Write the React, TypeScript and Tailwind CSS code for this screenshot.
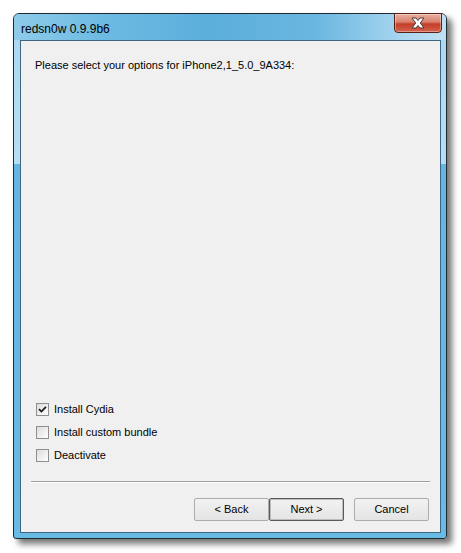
import React from "react";

const options = [
  { label: "Install Cydia", checked: true },
  { label: "Install custom bundle", checked: false },
  { label: "Deactivate", checked: false },
];

function Checkbox({ checked }: { checked: boolean }) {
  return (
    <span className="flex h-[13px] w-[13px] shrink-0 items-center justify-center border border-[#8e8f8f] bg-gradient-to-br from-[#dcdcdc] to-[#ffffff]">
      {checked && (
        <svg width="9" height="9" viewBox="0 0 9 9">
          <path d="M1 4.2 L3.4 6.6 L8 1.8" fill="none" stroke="#1a1a1a" strokeWidth="1.7" />
        </svg>
      )}
    </span>
  );
}

function Button({ label, primary }: { label: string; primary?: boolean }) {
  return (
    <button
      className={
        "flex h-[23px] w-[75px] items-center justify-center rounded-[2px] bg-gradient-to-b from-[#f2f2f2] to-[#e4e4e4] text-[11px] text-black " +
        (primary
          ? "border border-[#5a5a5a] shadow-[inset_0_0_0_1px_#bdbdbd]"
          : "border border-[#acacac]")
      }
    >
      {label}
    </button>
  );
}

export default function App() {
  return (
    <div
      className="h-[553px] w-[461px] bg-white pl-[13px] pt-[13px]"
      style={{ fontFamily: "'Liberation Sans', Arial, sans-serif" }}
    >
      {/* Fenster mit Aero-Rahmen */}
      <div className="flex h-[526px] w-[434px] flex-col rounded-t-[6px] rounded-b-[3px] border border-[#1f2a33] bg-[linear-gradient(to_bottom,#aad9f1_0px,#b7def2_150px,#62b6e0_150px,#68bbe2_100%)] pb-[5px] pl-[6px] pr-[5px] shadow-[5px_5px_6px_rgba(0,0,0,0.55)]">
        {/* Titelleiste */}
        <div className="-mx-[6px] -mr-[5px] flex h-[26px] items-start rounded-t-[5px] bg-[linear-gradient(to_right,#8fcbe9_0%,#6dbbe3_20%,#5caedb_45%,#6ab7e0_70%,#a9d6ef_90%,#bfe0f2_100%)] pl-[7px] pr-[4px]">
          <span className="mt-[8px] flex-1 text-[12px] leading-[14px] text-black">redsn0w 0.9.9b6</span>
          <div className="-mt-px flex h-[20px] w-[48px] items-center justify-center rounded-b-[4px] border border-[#5a2018] bg-[linear-gradient(to_bottom,#e8b0a2_0%,#d9806c_45%,#c43d28_55%,#d5624c_100%)] shadow-[inset_0_0_0_1px_rgba(255,255,255,0.35)]">
            <svg width="16" height="12" viewBox="0 0 16 12">
              <path
                d="M2 1 H6 L8 3.5 L10 1 H14 L10.3 6 L14 11 H10 L8 8.5 L6 11 H2 L5.7 6 Z"
                fill="#ffffff"
                stroke="#4a3a3a"
                strokeWidth="1"
                strokeLinejoin="round"
              />
            </svg>
          </div>
        </div>

        {/* Client-Bereich */}
        <div className="flex flex-1 flex-col border border-[#3e6682] bg-[#f0f0f0]">
          <p className="pl-[14px] pt-[18px] text-[11px] leading-[13px] text-black">
            Please select your options for iPhone2,1_5.0_9A334:
          </p>

          <div className="flex-1" />

          <ul className="flex flex-col gap-[10px] pl-[15px]">
            {options.map((opt) => (
              <li key={opt.label} className="flex h-[13px] items-center gap-[5px] text-[11px] text-black">
                <Checkbox checked={opt.checked} />
                <span>{opt.label}</span>
              </li>
            ))}
          </ul>

          <div className="mx-[10px] mt-[19px] h-px bg-[#a0a0a0] shadow-[0_1px_0_#ffffff]" />

          <div className="flex pb-[11px] pl-[173px] pt-[16px]">
            <Button label="< Back" />
            <Button label="Next >" primary />
            <div className="w-[10px]" />
            <Button label="Cancel" />
          </div>
        </div>
      </div>
    </div>
  );
}
